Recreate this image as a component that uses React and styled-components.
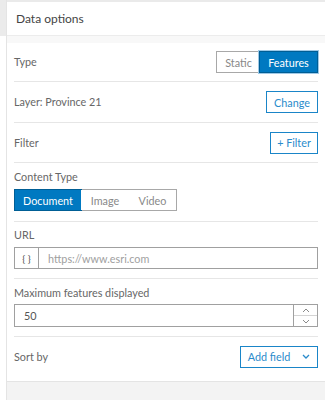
import React from 'react';
import styled, { createGlobalStyle } from 'styled-components';

const Global = createGlobalStyle`
  html, body { margin: 0; padding: 0; background: #fff; }
  body { font-family: Lato, "Open Sans", sans-serif; }
  *, *::before, *::after { box-sizing: border-box; }
`;

const Shell = styled.div`
  display: flex;
  width: 325px;
  height: 400px;
  overflow: hidden;
`;

// thin gray column on the left of the panel
const Rail = styled.div`
  width: 7px;
  flex: none;
  border-right: 1px solid #e4e4e4;
  background: linear-gradient(#ebebeb 0, #ebebeb 36px, #fff 36px);
`;

const Panel = styled.section`
  flex: 1;
  display: flex;
  flex-direction: column;
  border-top: 2px solid #eaeaea;
  background: #fff;
  color: #666;
  font-size: 11px;
`;

const Header = styled.header`
  height: 34px;
  display: flex;
  align-items: center;
  padding-left: 9px;
  font-size: 12px;
  color: #444;
  border-bottom: 1px solid #ececec;
`;

const Gap = styled.div`
  height: 7px;
  background: #f8f8f8;
`;

const Body = styled.div`
  padding: 0 7px;
  flex: 1;
`;

const Row = styled.div`
  display: flex;
  align-items: center;
  justify-content: space-between;
  height: ${p => p.h || 40}px;
  border-bottom: ${p => (p.last ? 'none' : '1px solid #e6e6e6')};
`;

const Block = styled.div`
  display: flex;
  flex-direction: column;
  align-items: ${p => (p.stretch ? 'stretch' : 'flex-start')};
  gap: ${p => p.gap || 5}px;
  padding: ${p => p.pad || '7px 0 9px'};
  border-bottom: 1px solid #e6e6e6;
`;

const Label = styled.span`
  font-size: 10.8px;
  line-height: 14px;
  color: #666;
`;

const Segmented = styled.div`
  display: inline-flex;
  border: 1px solid #a8a8a8;
  height: 22px;
`;

const Seg = styled.button`
  border: ${p => (p.active ? '1px solid #005e95' : 'none')};
  margin: ${p => (p.active ? '-1px' : '0')};
  background: ${p => (p.active ? '#0079c1' : '#fff')};
  color: ${p => (p.active ? '#fff' : '#888')};
  font: inherit;
  font-size: 10.8px;
  width: ${p => p.w}px;
  padding: 0;
  height: ${p => (p.active ? '22px' : '20px')};
  cursor: pointer;
  box-shadow: ${p => (p.focus ? '0 0 0 1px #9fc9e6' : 'none')};
`;

const OutlineButton = styled.button`
  display: inline-flex;
  align-items: center;
  justify-content: center;
  gap: 12px;
  height: 22px;
  width: ${p => p.w}px;
  padding: 0;
  border: 1px solid #1a85c8;
  background: #fff;
  color: #2a8bcb;
  font: inherit;
  font-size: 10.8px;
  cursor: pointer;
`;

const InputGroup = styled.div`
  display: flex;
  height: ${p => p.h || 23}px;
  border: 1px solid #a0a0a0;
  font-size: 10.8px;
`;

const Prefix = styled.span`
  width: 24px;
  display: flex;
  align-items: center;
  justify-content: center;
  border-right: 1px solid #a0a0a0;
  color: #555;
  font-size: 10px;
`;

const Field = styled.span`
  flex: 1;
  display: flex;
  align-items: center;
  padding-left: ${p => p.pl || 9}px;
  color: ${p => (p.placeholder ? '#a0a0a0' : '#555')};
`;

const Spinner = styled.div`
  width: 24px;
  display: flex;
  flex-direction: column;
  border-left: 1px solid #a0a0a0;
`;

const SpinHalf = styled.div`
  flex: 1;
  display: flex;
  align-items: center;
  justify-content: center;
  border-top: ${p => (p.bottom ? '1px solid #d4d4d4' : 'none')};
`;

const Footer = styled.div`
  height: 19px;
  background: #f3f3f3;
  border-top: 1px solid #e4e4e4;
`;

const Chevron = ({ up }) => (
  <svg width="8" height="5" viewBox="0 0 8 5">
    <path d={up ? 'M1 4 L4 1 L7 4' : 'M1 1 L4 4 L7 1'} fill="none" stroke="#8a8a8a" strokeWidth="1" />
  </svg>
);

const DownArrow = () => (
  <svg width="8" height="5" viewBox="0 0 8 5">
    <path d="M1 1 L4 4 L7 1" fill="none" stroke="#2a8bcb" strokeWidth="1.3" />
  </svg>
);

export default function App() {
  return (
    <Shell>
      <Global />
      <Rail />
      <Panel>
        <Header>Data options</Header>
        <Gap />
        <Body>
          <Row h={39}>
            <Label>Type</Label>
            <Segmented>
              <Seg w={43}>Static</Seg>
              <Seg active focus w={59}>Features</Seg>
            </Segmented>
          </Row>
          <Row h={41}>
            <Label>Layer: Province 21</Label>
            <OutlineButton w={52}>Change</OutlineButton>
          </Row>
          <Row h={40}>
            <Label>Filter</Label>
            <OutlineButton w={48}>+ Filter</OutlineButton>
          </Row>
          <Block pad="7px 0 10px">
            <Label>Content Type</Label>
            <Segmented>
              <Seg active w={68}>Document</Seg>
              <Seg w={48}>Image</Seg>
              <Seg w={47}>Video</Seg>
            </Segmented>
          </Block>
          <Block stretch pad="6px 0 9px">
            <Label>URL</Label>
            <InputGroup h={22}>
              <Prefix>{'{ }'}</Prefix>
              <Field placeholder="true">https://www.esri.com</Field>
            </InputGroup>
          </Block>
          <Block stretch gap={4} pad="7px 0 9px">
            <Label>Maximum features displayed</Label>
            <InputGroup h={23}>
              <Field pl={9}>50</Field>
              <Spinner>
                <SpinHalf><Chevron up /></SpinHalf>
                <SpinHalf bottom><Chevron /></SpinHalf>
              </Spinner>
            </InputGroup>
          </Block>
          <Row h={39} last>
            <Label>Sort by</Label>
            <OutlineButton w={78}>Add field <DownArrow /></OutlineButton>
          </Row>
        </Body>
        <Footer />
      </Panel>
    </Shell>
  );
}
